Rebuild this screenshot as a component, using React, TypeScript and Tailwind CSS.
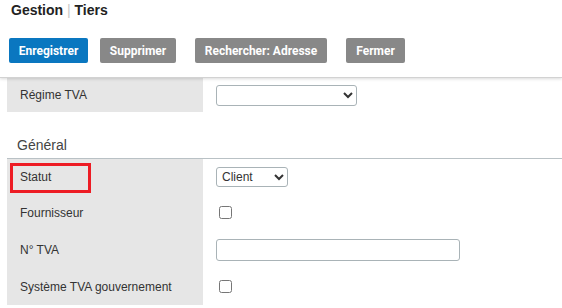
import React from 'react';

const Label = ({ text, h, marked }: { text: string; h: string; marked?: boolean }) => (
  <div className={`relative w-[196px] shrink-0 bg-[#e6e6e6] pl-[13px] flex items-center ${h}`}>
    {marked && (
      <div className="absolute left-[3px] top-[4px] w-[81px] h-[30px] border-[3px] border-[#ed1c24]" />
    )}
    <span>{text}</span>
  </div>
);

const App = () => {
  return (
    <div className="w-[562px] h-[308px] overflow-hidden bg-white text-[12px] text-[#333] font-['Liberation_Sans',Arial,sans-serif]">
      <div className="relative z-10 h-[78px] bg-white border-b border-[#d2d2d2] shadow-[0_1px_3px_rgba(0,0,0,0.15)]">
        <div className="pl-[11px] h-[20px] leading-[20px] text-[14px] font-bold text-[#222]">
          Gestion <span className="font-normal text-[#c8c8c8]">|</span> Tiers
        </div>
        <div className="flex pl-[9px] mt-[18px] font-['Roboto',sans-serif] font-bold text-[12px] text-white">
          <button className="w-[79px] h-[25px] rounded-[2px] bg-[#0a77c0]">Enregistrer</button>
          <button className="ml-[12px] w-[76px] h-[25px] rounded-[2px] bg-[#888888]">Supprimer</button>
          <button className="ml-[19px] w-[132px] h-[25px] rounded-[2px] bg-[#888888]">Rechercher: Adresse</button>
          <button className="ml-[19px] w-[59px] h-[25px] rounded-[2px] bg-[#888888]">Fermer</button>
        </div>
      </div>

      <div className="pl-[7px]">
        <div className="flex">
          <Label text="Régime TVA" h="h-[34px]" />
          <div className="pl-[13px] flex items-center">
            <select className="w-[141px] h-[21px] rounded-[3px] border border-[#a9b3b7] bg-white text-[12px]">
              <option></option>
            </select>
          </div>
        </div>

        <div className="h-[47px] flex items-end pb-[2px] pl-[10px] text-[14px] text-[#444] border-b border-[#b9c1c5]">
          Général
        </div>

        <div className="flex">
          <Label text="Statut" h="h-[35px]" marked />
          <div className="pl-[13px] flex items-center">
            <select className="w-[72px] h-[20px] rounded-[3px] border border-[#a9b3b7] bg-white text-[12px] pl-[1px]">
              <option>Client</option>
            </select>
          </div>
        </div>

        <div className="flex">
          <Label text="Fournisseur" h="h-[37px]" />
          <div className="pl-[16px] flex items-center">
            <input type="checkbox" className="m-0 w-[13px] h-[13px]" />
          </div>
        </div>

        <div className="flex">
          <Label text="N° TVA" h="h-[37px]" />
          <div className="pl-[13px] flex items-center">
            <input type="text" className="w-[244px] h-[22px] rounded-[3px] border border-[#a9b3b7] bg-white" />
          </div>
        </div>

        <div className="flex">
          <Label text="Système TVA gouvernement" h="h-[37px]" />
          <div className="pl-[16px] flex items-center">
            <input type="checkbox" className="m-0 w-[13px] h-[13px]" />
          </div>
        </div>
      </div>
    </div>
  );
};

export default App;
